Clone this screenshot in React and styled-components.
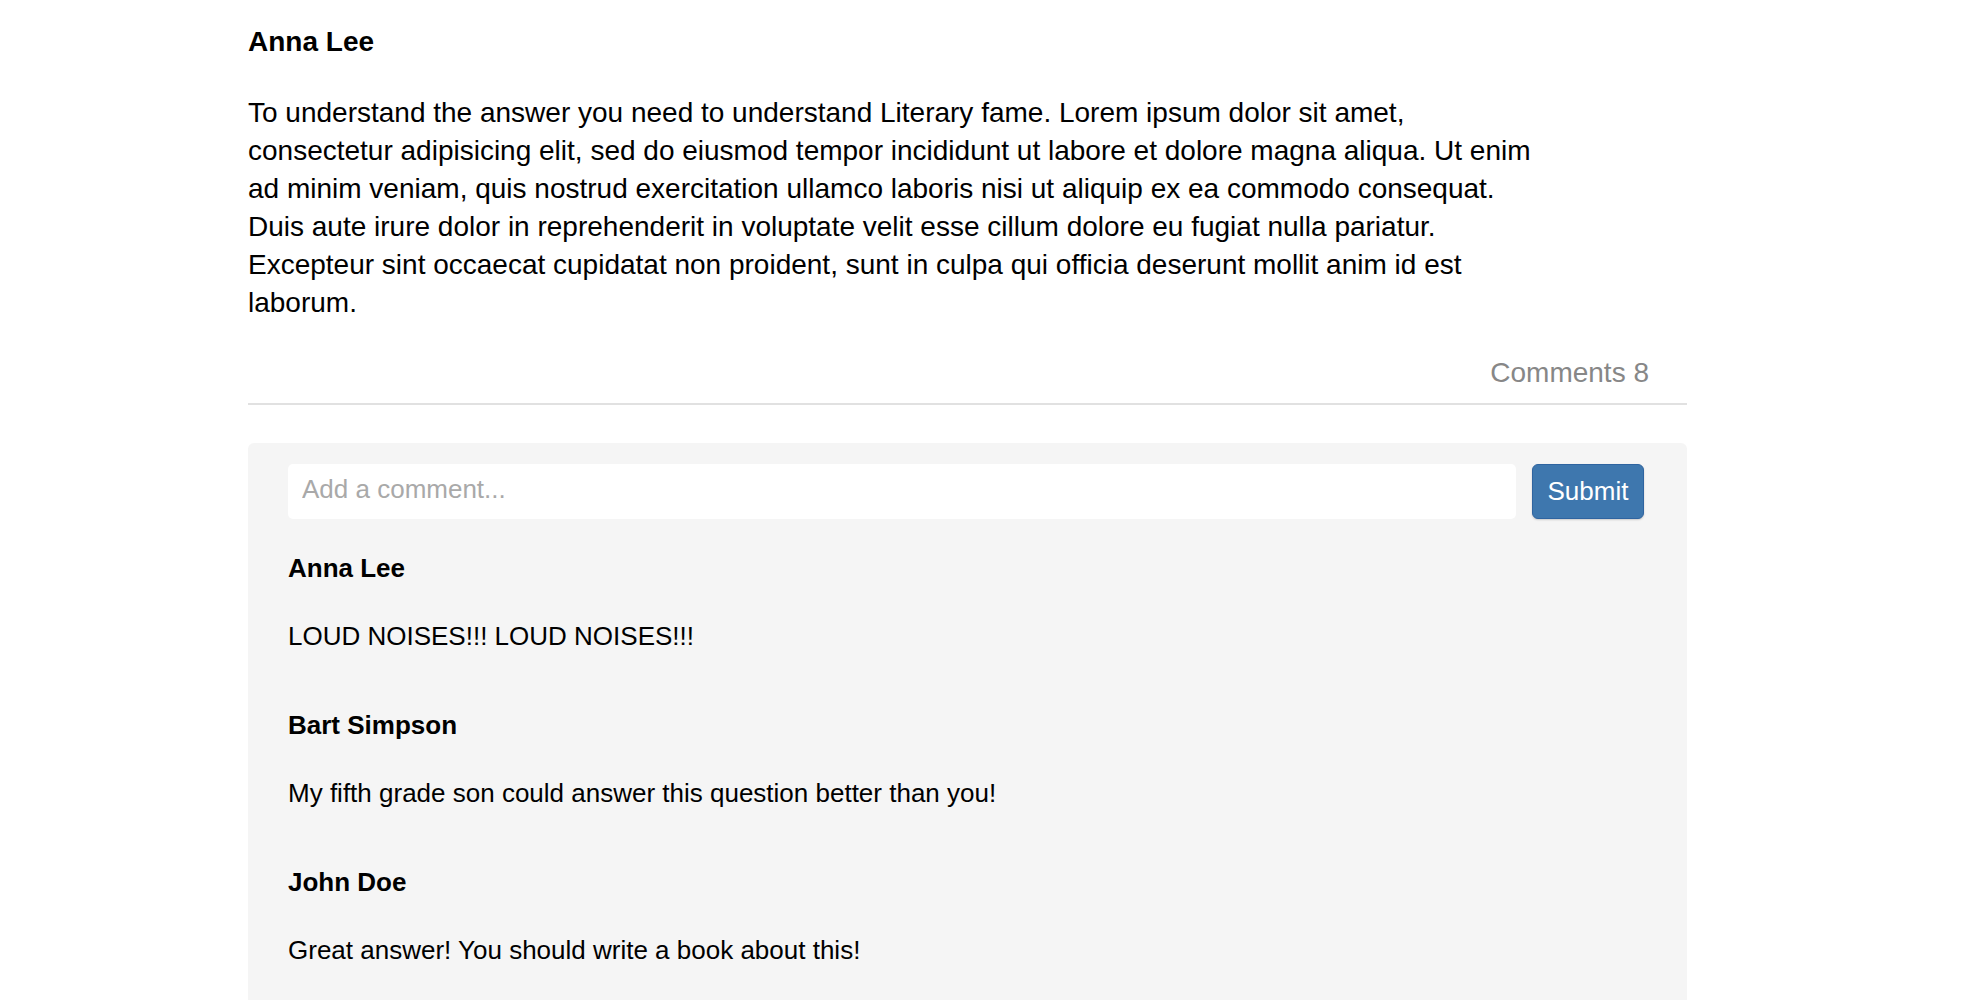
import React from 'react';
import styled, { createGlobalStyle } from 'styled-components';

const GlobalStyle = createGlobalStyle`
  body {
    margin: 0;
    background: #fff;
    color: #000;
    font-family: "Liberation Sans", Arial, Helvetica, sans-serif;
  }
`;

const Answer = styled.article`
  width: 1439px;
  margin-left: 248px;
  padding-top: 23px;
`;

const Author = styled.h3`
  margin: 0;
  font-size: 28px;
  font-weight: 700;
  line-height: 37.5px;
`;

const Body = styled.p`
  margin: 33px 0 0;
  max-width: 1295px;
  font-size: 28px;
  line-height: 38px;
`;

const Meta = styled.div`
  display: flex;
  justify-content: flex-end;
  margin-top: 32px;
  padding-right: 38px;
  font-size: 28px;
  line-height: 37.5px;
  color: #878787;
`;

const Divider = styled.hr`
  margin: 12px 0 0;
  border: 0;
  height: 2px;
  background: #e1e1e1;
`;

const CommentBox = styled.section`
  margin-top: 38px;
  padding: 21px 43px 40px 40px;
  background: #f5f5f5;
  border-radius: 6px;
`;

const CommentForm = styled.form`
  display: flex;
  gap: 16px;
`;

const CommentInput = styled.input`
  flex: 1;
  box-sizing: border-box;
  height: 55px;
  padding: 0 14px 4px;
  border: 0;
  border-radius: 5px;
  background: #fff;
  font-family: inherit;
  font-size: 26px;
  color: #000;
  outline: none;

  &::placeholder {
    color: #a9a9a9;
  }
`;

const SubmitButton = styled.button`
  box-sizing: border-box;
  width: 112px;
  height: 55px;
  padding: 0;
  border: 1px solid #2f64a0;
  border-radius: 6px;
  background: #3e77ae;
  box-shadow: 0 1px 2px rgba(0, 0, 0, 0.18);
  color: #fff;
  font-family: inherit;
  font-size: 26px;
  cursor: pointer;
`;

const CommentList = styled.div`
  margin-top: 31px;
`;

const Comment = styled.div`
  & + & {
    margin-top: 53px;
  }
`;

const CommentAuthor = styled.h4`
  margin: 0;
  font-size: 26px;
  font-weight: 700;
  line-height: 36px;
`;

const CommentText = styled.p`
  margin: 32px 0 0;
  font-size: 26px;
  line-height: 36px;
`;

const comments = [
  { author: 'Anna Lee', text: 'LOUD NOISES!!! LOUD NOISES!!!' },
  { author: 'Bart Simpson', text: 'My fifth grade son could answer this question better than you!' },
  { author: 'John Doe', text: 'Great answer! You should write a book about this!' },
];

const App = () => {
  return (
    <>
      <GlobalStyle />
      <Answer>
        <Author>Anna Lee</Author>
        <Body>
          To understand the answer you need to understand Literary fame. Lorem ipsum dolor sit amet,
          consectetur adipisicing elit, sed do eiusmod tempor incididunt ut labore et dolore magna aliqua.
          Ut enim ad minim veniam, quis nostrud exercitation ullamco laboris nisi ut aliquip ex ea commodo
          consequat. Duis aute irure dolor in reprehenderit in voluptate velit esse cillum dolore eu fugiat
          nulla pariatur. Excepteur sint occaecat cupidatat non proident, sunt in culpa qui officia deserunt
          mollit anim id est laborum.
        </Body>
        <Meta>Comments 8</Meta>
        <Divider />
        <CommentBox>
          <CommentForm onSubmit={(e) => e.preventDefault()}>
            <CommentInput placeholder="Add a comment..." />
            <SubmitButton type="submit">Submit</SubmitButton>
          </CommentForm>
          <CommentList>
            {comments.map((c) => (
              <Comment key={c.author}>
                <CommentAuthor>{c.author}</CommentAuthor>
                <CommentText>{c.text}</CommentText>
              </Comment>
            ))}
          </CommentList>
        </CommentBox>
      </Answer>
    </>
  );
};

export default App;
